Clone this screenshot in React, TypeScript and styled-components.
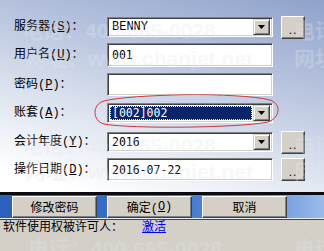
import React from 'react';
import styled, { createGlobalStyle } from 'styled-components';

const GlobalStyle = createGlobalStyle`
  html, body {
    margin: 0;
    padding: 0;
    overflow: hidden;
  }
  body {
    font-family: "Liberation Mono", "Noto Sans CJK SC", monospace;
    font-size: 12px;
  }
`;

const cjk = `"Liberation Mono", "Noto Sans CJK SC", monospace`;

const Window = styled.div`
  position: relative;
  width: 324px;
  height: 251px;
  overflow: hidden;
  display: flex;
  flex-direction: column;
  font-family: ${cjk};
  font-size: 12px;
  color: #000;
`;

const FormArea = styled.div`
  height: 192px;
  box-sizing: border-box;
  padding: 17px 0 0 14px;
  background: linear-gradient(195deg, #8fa2cb 0%, #b3c0dc 30%, #dfe5f0 65%, #ffffff 92%);
`;

const Row = styled.div<{ $h: number; $mb: number }>`
  display: flex;
  align-items: center;
  height: ${({ $h }) => $h}px;
  margin-bottom: ${({ $mb }) => $mb}px;
`;

const Label = styled.div`
  width: 93px;
  white-space: nowrap;
  font-size: 12px;
  line-height: 14px;
`;

const Key = styled.span`
  text-decoration: underline;
`;

const Field = styled.div<{ $serif?: boolean }>`
  width: 166px;
  height: 100%;
  box-sizing: border-box;
  display: flex;
  align-items: center;
  background: #fff;
  border: 1px solid;
  border-color: #808080 #ffffff #ffffff #808080;
  box-shadow: inset 1px 1px #404040, inset -1px -1px #d4d0c8;
  padding: 2px 2px 2px 4px;
  font-family: ${({ $serif }) => ($serif ? `"Liberation Mono", monospace` : `"DejaVu Sans Mono", monospace`)};
  font-size: ${({ $serif }) => ($serif ? '12px' : '11.5px')};
`;

const Value = styled.span`
  flex: 1;
  white-space: nowrap;
`;

const Selected = styled.span`
  flex: 1;
  align-self: stretch;
  display: flex;
  align-items: center;
  margin: 0 1px 0 -2px;
  padding-left: 2px;
  background: #0a246a;
  color: #fff;
  outline: 1px dotted #f0f0c0;
  outline-offset: -1px;
  font-family: "DejaVu Sans Mono", monospace;
  font-size: 11.5px;
`;

const DropButton = styled.div`
  width: 17px;
  height: 16px;
  box-sizing: border-box;
  display: flex;
  align-items: center;
  justify-content: center;
  background: #d4d0c8;
  border: 1px solid;
  border-color: #d4d0c8 #404040 #404040 #d4d0c8;
  box-shadow: inset 1px 1px #ffffff, inset -1px -1px #808080;
`;

const SideButton = styled.div`
  width: 24px;
  height: 23px;
  margin-left: 8px;
  box-sizing: border-box;
  display: flex;
  align-items: flex-end;
  justify-content: center;
  padding-bottom: 3px;
  background: #d4d0c8;
  border: 1px solid;
  border-color: #ffffff #404040 #404040 #ffffff;
  box-shadow: inset -1px -1px #808080;
  font-family: "Liberation Sans", sans-serif;
  font-size: 12px;
  line-height: 10px;
  letter-spacing: 1px;
`;

const DarkBar = styled.div`
  height: 3px;
  background: #0c0c10;
`;

const ButtonBand = styled.div`
  height: 24px;
  box-sizing: border-box;
  display: flex;
  align-items: center;
  gap: 10px;
  padding-left: 12px;
  background: linear-gradient(to right, #2b60bd 0%, #3a70cb 45%, #5d90dc 80%, #9cbbe9 100%);
  border-bottom: 1px solid #e8eef8;
`;

const PushButton = styled.div`
  width: 85px;
  height: 22px;
  box-sizing: border-box;
  display: flex;
  align-items: center;
  justify-content: center;
  background: #d4d0c8;
  border: 1px solid;
  border-color: #ffffff #404040 #404040 #ffffff;
  box-shadow: inset -1px -1px #808080;
  font-size: 12px;
`;

const StatusArea = styled.div`
  flex: 1;
  display: flex;
  align-items: flex-start;
  padding: 1px 0 0 3px;
  background: #d4d0c8;
  border-top: 1px solid #1e48a8;
  font-size: 12px;
  line-height: 14px;
`;

const Link = styled.a`
  margin-left: 19px;
  color: #0000ff;
  text-decoration: underline;
`;

const Watermark = styled.div`
  position: absolute;
  inset: 0;
  pointer-events: none;
  font-family: "Liberation Sans", "Noto Sans CJK SC", sans-serif;
  font-size: 21px;
  font-weight: bold;
  color: rgba(226, 230, 238, 0.32);
  white-space: nowrap;
`;

const Mark = styled.div<{ $x: number; $y: number }>`
  position: absolute;
  left: ${({ $x }) => $x}px;
  top: ${({ $y }) => $y}px;
`;

const Annotation = styled.svg`
  position: absolute;
  left: 0;
  top: 0;
  pointer-events: none;
`;

const Arrow = () => (
  <svg width="7" height="4" viewBox="0 0 7 4">
    <path d="M0 0h7L3.5 4z" fill="#000" />
  </svg>
);

const marks = [
  { x: 22, y: 14, t: '电话：400-665-0028' },
  { x: 25, y: 42, t: '网址：www.chanjet.net' },
  { x: 294, y: 14, t: '电话' },
  { x: 294, y: 42, t: '网址' },
  { x: 22, y: 129, t: '电话：400-665-0028' },
  { x: 25, y: 155, t: '网址：www.chanjet.net' },
  { x: 294, y: 129, t: '电话' },
  { x: 294, y: 155, t: '网址' },
  { x: 28, y: 232, t: '电话：400-665-0028' },
  { x: 294, y: 232, t: '电话' },
];

export default function App() {
  return (
    <>
      <GlobalStyle />
      <Window>
        <FormArea>
          <Row $h={20} $mb={6}>
            <Label>服务器(<Key>S</Key>)：</Label>
            <Field $serif>
              <Value>BENNY</Value>
              <DropButton><Arrow /></DropButton>
            </Field>
            <SideButton>..</SideButton>
          </Row>
          <Row $h={24} $mb={6}>
            <Label>用户名(<Key>U</Key>)：</Label>
            <Field>
              <Value>001</Value>
            </Field>
          </Row>
          <Row $h={23} $mb={7}>
            <Label>密码(<Key>P</Key>)：</Label>
            <Field />
          </Row>
          <Row $h={20} $mb={9}>
            <Label>账套(<Key>A</Key>)：</Label>
            <Field>
              <Selected>[002]002</Selected>
              <DropButton><Arrow /></DropButton>
            </Field>
          </Row>
          <Row $h={20} $mb={6}>
            <Label>会计年度(<Key>Y</Key>)：</Label>
            <Field>
              <Value>2016</Value>
              <DropButton><Arrow /></DropButton>
            </Field>
            <SideButton>..</SideButton>
          </Row>
          <Row $h={23} $mb={0}>
            <Label>操作日期(<Key>D</Key>)：</Label>
            <Field>
              <Value>2016-07-22</Value>
            </Field>
            <SideButton>..</SideButton>
          </Row>
        </FormArea>
        <DarkBar />
        <ButtonBand>
          <PushButton>修改密码</PushButton>
          <PushButton>确定(<Key>O</Key>)</PushButton>
          <PushButton>取消</PushButton>
        </ButtonBand>
        <StatusArea>
          软件使用权被许可人：
          <Link>激活</Link>
        </StatusArea>

        <Watermark>
          {marks.map((m, i) => (
            <Mark key={i} $x={m.x} $y={m.y}>{m.t}</Mark>
          ))}
        </Watermark>

        <Annotation width="324" height="251">
          <path
            d="M104 101 C 130 94, 240 92, 270 100 C 282 104, 280 118, 268 122 C 240 128, 130 129, 104 124 C 92 121, 92 104, 104 101 Z"
            fill="none"
            stroke="#c8383c"
            strokeWidth="1"
          />
        </Annotation>
      </Window>
    </>
  );
}
